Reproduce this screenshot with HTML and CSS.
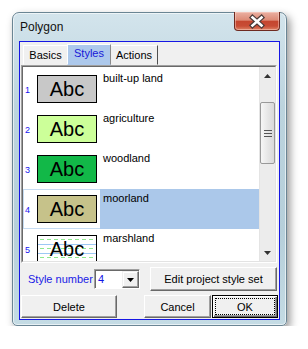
FILE: index.html
```html
<!DOCTYPE html>
<html lang="en">
<head>
  <meta charset="UTF-8">
  <title>Polygon</title>
  <link rel="stylesheet" href="styles.css">
</head>
<body>
  <div class="window">
    <div class="titlebar">
      <span class="title">Polygon</span>
      <span class="close-btn">
        <svg width="44" height="17" viewBox="0 0 44 17">
          <path d="M17.5 4.5 L26.5 12.5 M26.5 4.5 L17.5 12.5" stroke="#4a3a38" stroke-width="5" stroke-linecap="square" fill="none"/>
          <path d="M17.5 4.5 L26.5 12.5 M26.5 4.5 L17.5 12.5" stroke="#fff" stroke-width="2.6" stroke-linecap="square" fill="none"/>
        </svg>
      </span>
    </div>
    <div class="client">
      <div class="tabs">
        <span class="tab tab-basics">Basics</span>
        <span class="tab tab-styles active">Styles</span>
        <span class="tab tab-actions">Actions</span>
      </div>
      <div class="listbox">
        <div class="list-inner">
          <div class="rows">
            <div class="row">
              <div class="row-left"><span class="num">1</span><span class="swatch s-grey">Abc</span></div>
              <div class="label">built-up land</div>
            </div>
            <div class="row">
              <div class="row-left"><span class="num">2</span><span class="swatch s-lime">Abc</span></div>
              <div class="label">agriculture</div>
            </div>
            <div class="row">
              <div class="row-left"><span class="num">3</span><span class="swatch s-green">Abc</span></div>
              <div class="label">woodland</div>
            </div>
            <div class="row selected">
              <div class="row-left"><span class="num">4</span><span class="swatch s-khaki">Abc</span></div>
              <div class="label">moorland</div>
            </div>
            <div class="row">
              <div class="row-left"><span class="num">5</span>
                <span class="swatch s-marsh">
                  <svg class="marsh-lines" width="58" height="26" viewBox="0 0 58 26">
                    <g stroke="#8fe88f" stroke-width="1" stroke-dasharray="4 3">
                      <line x1="2" y1="3.5" x2="58" y2="3.5"/>
                      <line x1="2" y1="12.5" x2="58" y2="12.5"/>
                      <line x1="2" y1="21.5" x2="58" y2="21.5"/>
                    </g>
                    <g stroke="#9cc8f4" stroke-width="1">
                      <line x1="0" y1="8.5" x2="58" y2="8.5"/>
                      <line x1="0" y1="17.5" x2="58" y2="17.5"/>
                    </g>
                  </svg>
                  <span class="swatch-text">Abc</span>
                </span>
              </div>
              <div class="label">marshland</div>
            </div>
          </div>
          <div class="scrollbar">
            <div class="sb-btn">
              <svg width="7" height="4" viewBox="0 0 7 4"><path d="M0 4 L3.5 0 L7 4 Z" fill="#333"/></svg>
            </div>
            <div class="sb-thumb">
              <svg width="8" height="7" viewBox="0 0 8 7">
                <path d="M0 0.5 H8 M0 3.5 H8 M0 6.5 H8" stroke="#555" stroke-width="1"/>
              </svg>
            </div>
            <div class="sb-spacer"></div>
            <div class="sb-btn">
              <svg width="7" height="4" viewBox="0 0 7 4"><path d="M0 0 L7 0 L3.5 4 Z" fill="#333"/></svg>
            </div>
          </div>
        </div>
      </div>
      <div class="style-row">
        <span class="style-label">Style number</span>
        <span class="combo">
          <span class="combo-value">4</span>
          <span class="combo-btn">
            <svg width="7" height="4" viewBox="0 0 7 4"><path d="M0 0 L7 0 L3.5 4 Z" fill="#000"/></svg>
          </span>
        </span>
        <button class="btn edit-btn">Edit project style set</button>
      </div>
      <div class="button-row">
        <button class="btn delete-btn">Delete</button>
        <button class="btn cancel-btn">Cancel</button>
        <button class="btn ok-btn">OK</button>
      </div>
    </div>
  </div>
</body>
</html>
```

FILE: styles.css
```css
body { margin: 0; background: #fff; font-family: "Liberation Sans", Arial, sans-serif; font-size: 11px; color: #000; }

.window { margin: 12px 0 0 12px; width: 275px; height: 314px; box-sizing: border-box; border: 1px solid #6a8594; border-radius: 7px 7px 5px 5px; background: linear-gradient(to bottom, #d3e4ec, #bcd4de 30%, #b6cfda 70%, #c4dbe4); box-shadow: 3px 4px 9px rgba(0,0,0,0.42), inset 0 0 0 1px rgba(255,255,255,0.6); display: flex; flex-direction: column;}
.titlebar { height: 28px; display: flex; align-items: flex-start; flex-shrink: 0;}
.title { font-size: 12px; line-height: 14px; margin: 7px 0 0 7px; color: #111;}
.close-btn { margin-left: auto; margin-right: 6px; margin-top: -1px; width: 46px; height: 19px; box-sizing: border-box; border: 1px solid #6e2a20; border-top: none; border-radius: 0 0 4px 4px; background: linear-gradient(to bottom, #eab0a2 0%, #dd8a76 45%, #c5462f 52%, #c84c35 78%, #de8466 100%); box-shadow: inset 0 0 0 1px rgba(255,220,210,0.45); display: flex; align-items: center; justify-content: center;}

.client { margin: 0 6px; height: 279px; box-sizing: border-box; border: 1px solid #1616e4; background: #f0f0f0; display: flex; flex-direction: column;}

.tabs { display: flex; align-items: flex-end; height: 23px; padding-left: 3px; box-sizing: border-box; flex-shrink: 0;}
.tab { height: 20px; box-sizing: border-box; border: 1px solid; border-color: #fff #8a8a8a transparent #fff; line-height: 18px; text-align: center; background: #f0f0f0;}
.tab-basics { width: 44px; border-right: none;}
.tab-styles { width: 44px;}
.tab-actions { width: 47px; border-left: none; border-right-color: #505050;}
.tab.active { height: 21px; background: #adc9ec; color: #1818d8; border-color: #fff #8a8a8a transparent #fff; line-height: 17px;}

.listbox { margin: 0 2px 0 1px; height: 198px; box-sizing: border-box; border: 1px solid; border-color: #a0a0a0 #fff #fff #a0a0a0; flex-shrink: 0;}
.list-inner { height: 100%; box-sizing: border-box; border: 1px solid; border-color: #696969 #e3e3e3 #e3e3e3 #696969; background: #fff; display: flex; overflow: hidden;}
.rows { flex: 1; padding-top: 2px; overflow: hidden;}
.row { height: 40px; display: flex;}
.row-left { width: 77px; display: flex; align-items: center; box-sizing: border-box;}
.num { width: 14px; padding-left: 2px; box-sizing: border-box; color: #1414f0; font-size: 9px; line-height: 10px; margin-top: 2px;}
.swatch { width: 60px; height: 28px; box-sizing: border-box; border: 1px solid #000; font-size: 20px; line-height: 26px; text-align: center; position: relative;}
.s-grey { background: #c8c8c8;}
.s-lime { background: #ccff99;}
.s-green { background: #12b848;}
.s-khaki { background: #c6c28a;}
.s-marsh { background: #fff;}
.marsh-lines { position: absolute; left: 0; top: 0;}
.swatch-text { position: relative;}
.label { flex: 1; padding: 2px 0 0 3px; line-height: 14px;}
.row.selected .row-left { border: 1px solid #c6dcf2; border-right: none;}
.row.selected .row-left .num { padding-left: 1px; width: 13px;}
.row.selected .label { background: #abc8ea;}

.scrollbar { width: 15px; display: flex; flex-direction: column; background: #ececec; border-left: 1px solid #e4e4e4;}
.sb-btn { height: 17px; display: flex; align-items: center; justify-content: center; flex-shrink: 0;}
.sb-thumb { margin: 18px 0 0 0; height: 62px; box-sizing: border-box; border: 1px solid #999; border-radius: 2px; background: linear-gradient(to right, #f6f6f6, #e4e4e4 60%, #dadada); display: flex; align-items: center; justify-content: center; flex-shrink: 0;}
.sb-spacer { flex: 1;}

.style-row { display: flex; align-items: center; height: 24px; margin-top: 4px; flex-shrink: 0;}
.style-label { color: #1a1ae6; margin-left: 8px; width: 66px;}
.combo { width: 46px; height: 20px; box-sizing: border-box; border: 1px solid; border-color: #a0a0a0 #fff #fff #a0a0a0; box-shadow: inset 1px 1px 0 #696969; background: #fff; display: flex;}
.combo-value { flex: 1; color: #1414e6; padding: 3px 0 0 3px;}
.combo-btn { width: 17px; margin: 1px 0 0 0; box-sizing: border-box; border: 1px solid; border-color: #f0f0f0 #696969 #696969 #f0f0f0; box-shadow: inset -1px -1px 0 #a0a0a0, inset 1px 1px 0 #fff; background: #f0f0f0; display: flex; align-items: center; justify-content: center;}

.btn { box-sizing: border-box; background: #f0f0f0; border: 1px solid; border-color: #fff #696969 #696969 #fff; box-shadow: inset -1px -1px 0 #a0a0a0; font-family: "Liberation Sans", Arial, sans-serif; font-size: 11px; color: #000; padding: 0; margin: 0;}
.edit-btn { margin-left: 10px; width: 127px; height: 24px;}

.button-row { display: flex; height: 23px; margin-top: 4px; flex-shrink: 0;}
.delete-btn { margin-left: 1px; width: 96px; height: 23px;}
.cancel-btn { margin-left: 27px; width: 67px; height: 23px;}
.ok-btn { margin-left: 1px; width: 66px; height: 23px; border: 1px solid #000; box-shadow: inset 1px 1px 0 #fff, inset -1px -1px 0 #696969, inset -2px -2px 0 #a0a0a0; outline: 1px dotted #000; outline-offset: -4px;}
```
